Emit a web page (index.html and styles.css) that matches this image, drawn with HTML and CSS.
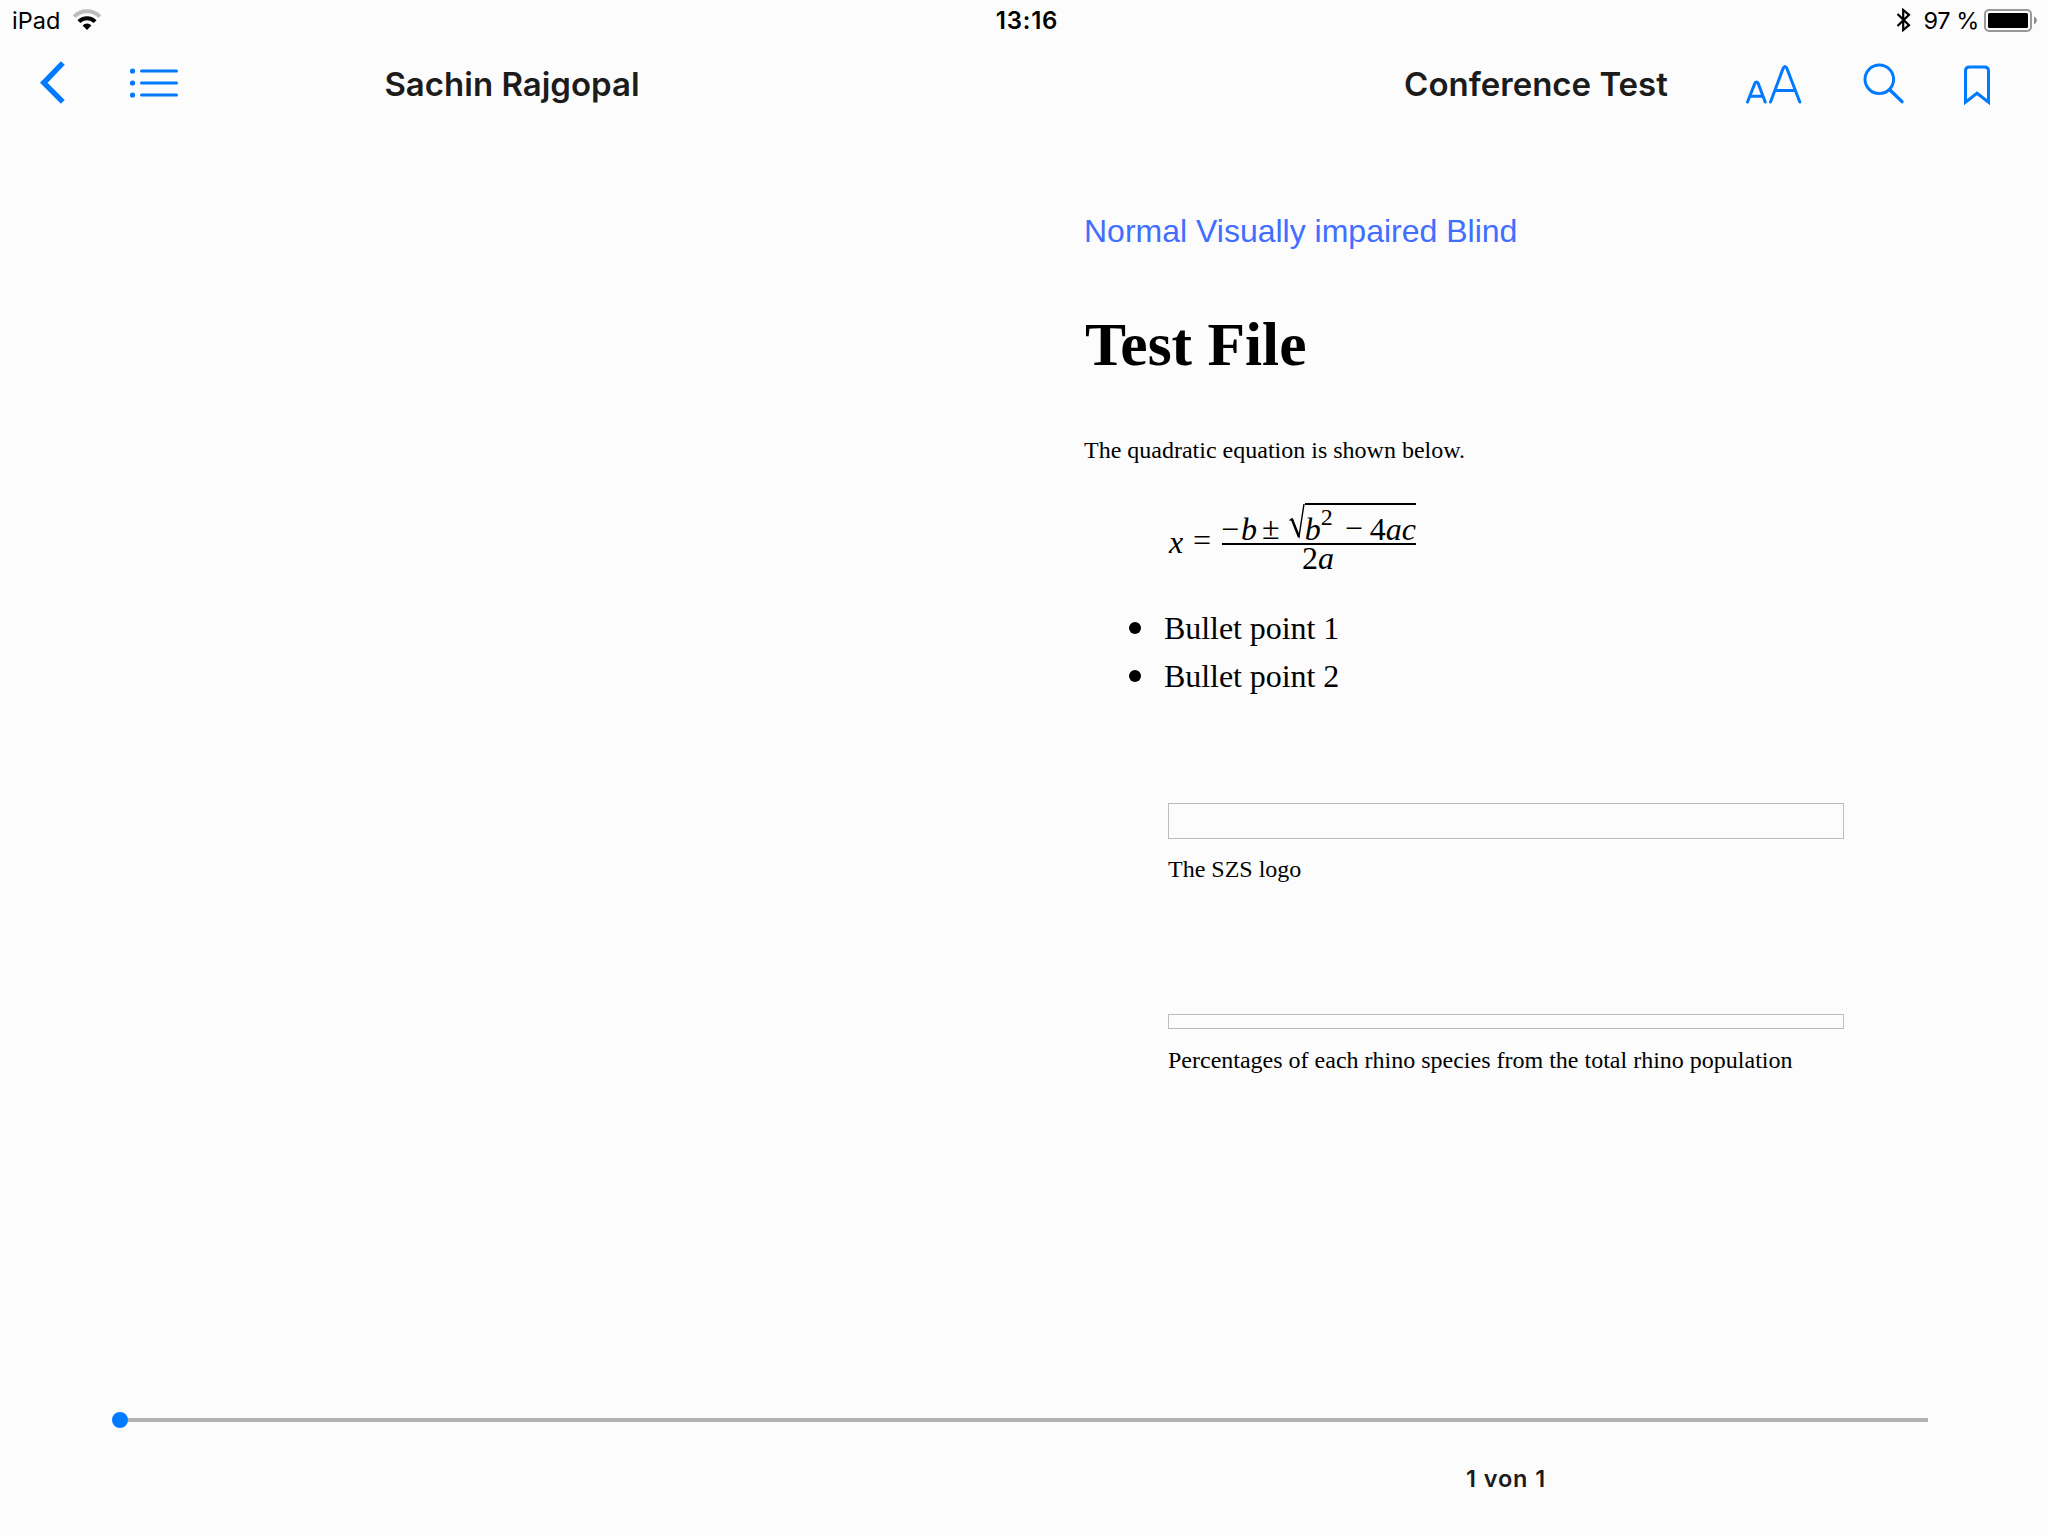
FILE: index.html
```html
<!DOCTYPE html>
<html lang="de">
<head>
<meta charset="utf-8">
<title>Conference Test</title>
<link rel="stylesheet" href="styles.css">
</head>
<body>
<header class="status">
  <div class="status-left">
    <span class="device">iPad</span>
    <svg class="wifi" width="30" height="22" viewBox="0 0 30 22">
      <path d="M2.2 7.6a18 18 0 0 1 25.6 0" fill="none" stroke="#bdbdbd" stroke-width="4"/>
      <path d="M6.9 12.6a11.4 11.4 0 0 1 16.2 0" fill="none" stroke="#000" stroke-width="4"/>
      <path d="M10.6 16.4a6.2 6.2 0 0 1 8.8 0L15 21z"/>
    </svg>
  </div>
  <span class="clock">13:16</span>
  <div class="status-right">
    <svg class="bluetooth" width="16" height="24" viewBox="0 0 16 24">
      <path d="M1.5 6L13 17.2 7.2 22V2L13 6.8 1.5 18" fill="none" stroke="#000" stroke-width="2.2"/>
    </svg>
    <span class="charge">97 %</span>
    <svg class="battery" width="54" height="24" viewBox="0 0 54 24">
      <rect x="1" y="1" width="46" height="21" rx="4" fill="none" stroke="#999" stroke-width="2"/>
      <rect x="4" y="4" width="40" height="15" rx="1.5"/>
      <path d="M50 7.6c3.8 1.8 3.8 6 0 7.8z" fill="#8c8c8c"/>
    </svg>
  </div>
</header>

<nav class="toolbar">
  <div class="half">
    <div class="tools-left">
      <svg class="back" width="26" height="44" viewBox="0 0 26 44">
        <path d="M22.8 2L3.8 21.8l19 19" fill="none" stroke="#007aff" stroke-width="5.4"/>
      </svg>
      <svg class="contents" width="50" height="30" viewBox="0 0 50 30">
        <g fill="#007aff"><circle cx="3.5" cy="3" r="2.6"/><circle cx="3.5" cy="15" r="2.6"/><circle cx="3.5" cy="27" r="2.6"/></g>
        <path d="M12.5 3H47.5M12.5 15H47.5M12.5 27H47.5" stroke="#007aff" stroke-width="3" stroke-linecap="round"/>
      </svg>
    </div>
    <span class="title">Sachin Rajgopal</span>
  </div>
  <div class="half">
    <span></span>
    <span class="title">Conference Test</span>
    <div class="tools-right">
      <svg class="fontsize" width="56" height="42" viewBox="0 0 56 42">
        <path d="M1.5 38L8.8 19.4q1.7-2.8 3.4 0L19.2 38M4.8 32.2H16M24.5 38L37.2 4.2q1.8-3.6 3.6 0L53.8 38M29 26.4H49" fill="none" stroke="#007aff" stroke-width="3" stroke-linecap="round"/>
      </svg>
      <svg class="search" width="42" height="42" viewBox="0 0 42 42">
        <circle cx="16.3" cy="16.3" r="14.3" fill="none" stroke="#007aff" stroke-width="3"/>
        <path d="M27 27L39 38.6" stroke="#007aff" stroke-width="3.4" stroke-linecap="round"/>
      </svg>
      <svg class="bookmark" width="28" height="42" viewBox="0 0 28 42">
        <path d="M2.5 37.2V6q0-4 4-4H21.5q4 0 4 4V37.2L14 28.2z" fill="none" stroke="#007aff" stroke-width="3"/>
      </svg>
    </div>
  </div>
</nav>

<main class="page">
  <p class="modes"><a>Normal Visually impaired Blind</a></p>
  <h1 class="heading">Test File</h1>
  <p class="text">The quadratic equation is shown below.</p>
  <div class="equation">
    <i class="var-x">x</i>
    <span class="equals">=</span>
    <div class="fraction">
      <div class="numerator">
        <span class="minus">−</span><i class="var-b">b</i><span class="plusminus">±</span>
        <svg class="radical" width="17" height="36" viewBox="0 0 17 36">
          <path d="M1.5 17.5L4 15.8 11 33.5 16 1" fill="none" stroke="#000" stroke-width="1.4"/>
          <path d="M3.8 16L11 34" stroke="#000" stroke-width="2.4"/>
        </svg>
        <div class="radicand">
          <i class="var-b2">b</i><span class="power">2</span><span class="minus2">−</span><span class="product">4<i>ac</i></span>
        </div>
      </div>
      <div class="denominator">2<i>a</i></div>
    </div>
  </div>
  <ul class="bullets">
    <li>Bullet point 1</li>
    <li>Bullet point 2</li>
  </ul>
  <figure class="figure logo">
    <div class="frame"></div>
    <figcaption>The SZS logo</figcaption>
  </figure>
  <figure class="figure chart">
    <div class="frame"></div>
    <figcaption>Percentages of each rhino species from the total rhino population</figcaption>
  </figure>
</main>

<footer class="footer">
  <div class="track"><span class="knob"></span></div>
  <p class="position">1 von 1</p>
</footer>
</body>
</html>
```
FILE: styles.css
```css
* { box-sizing: border-box; margin: 0; padding: 0; }

body {
  width: 2048px;
  height: 1536px;
  display: flex;
  flex-direction: column;
  overflow: hidden;
  background: #fcfcfc;
  color: #000;
  font-family: "Liberation Serif", "Times New Roman", serif;
}

svg { display: block; flex: none; }

/* Status bar */
.status {
  display: grid;
  grid-template-columns: 1fr auto 1fr;
  height: 40px;
  padding: 0 10px 0 12px;
  font: 23.5px/42px Inter, sans-serif;
}
.status-left, .status-right { display: flex; }
.status-right { justify-content: flex-end; }
.wifi { margin: 9px 0 0 12px; }
.clock { padding-left: 4px; font-size: 24px; font-weight: 600; letter-spacing: 0.8px; }
.bluetooth { margin: 8px 12px 0 0; }
.charge { letter-spacing: -0.4px; }
.battery { margin: 9px 0 0 5px; }

/* Toolbar */
.toolbar {
  display: grid;
  grid-template-columns: 1fr 1fr;
  height: 88px;
}
.half {
  display: grid;
  grid-template-columns: 1fr auto 1fr;
}
.title {
  font: 570 33px/88px Inter, sans-serif;
  color: #1c1c1c;
}
.tools-left { display: flex; padding-left: 40px; }
.back { margin-top: 21px; }
.contents { margin: 28px 0 0 63px; }
.tools-right { display: flex; justify-content: flex-end; padding-right: 57px; }
.fontsize { margin-top: 24px; }
.search { margin: 22.5px 0 0 60.5px; }
.bookmark { margin: 25px 0 0 58.5px; }

/* Book page */
.page {
  flex: 1;
  width: 844px;
  margin-left: 1084px;
  padding-top: 79px;
}
.modes {
  font: 32px/48px "Liberation Sans", Arial, sans-serif;
  color: #416eff;
}
.heading { margin: 53px 0 0 1px; font-size: 61.5px; line-height: 72px; }
.text { margin-top: 52px; font-size: 24px; line-height: 36px; }

/* Each term of the formula sits in a cell of its own width */
.equation {
  display: flex;
  height: 80px;
  margin: 32px 0 0 84px;
  font-size: 32px;
  line-height: 40px;
}
.var-x { width: 25px; margin-top: 22px; padding-left: 1px; }
.equals { width: 29px; margin-top: 20px; }
.fraction { width: 194px; }
.numerator {
  display: flex;
  height: 45px;
  border-bottom: 2px solid #000;
}
.minus, .var-b, .plusminus { margin-top: 9px; }
.minus { width: 20px; margin-left: -1px; }
.var-b { width: 21px; }
.plusminus { width: 26px; margin-top: 8px; }
.radical { margin-top: 3px; }
.radicand {
  display: flex;
  flex: 1;
  height: 36px;
  margin-top: 3px;
  border-top: 2px solid #000;
}
.var-b2, .minus2, .product { margin-top: 4px; }
.var-b2 { width: 16px; }
.power { width: 24px; margin-top: -8px; font-size: 24px; }
.minus2 { width: 25px; margin-top: 3px; }
.denominator { margin-top: -6px; line-height: 38px; text-align: center; padding-right: 2px; }

.bullets { margin-top: 24px; padding-left: 46px; list-style: none; }
.bullets li {
  display: flex;
  align-items: center;
  font-size: 32px;
  line-height: 48px;
  letter-spacing: -0.05px;
}
.bullets li::before {
  content: "";
  width: 12px;
  height: 12px;
  margin: 0 23px 1px -1px;
  border-radius: 50%;
  background: #000;
}

.figure { margin-left: 84px; font-size: 24px; line-height: 36px; }
.frame { width: 676px; border: 1px solid #bcbcbc; }
.logo { margin-top: 103px; }
.logo .frame { height: 36px; }
.chart { margin-top: 127px; }
.chart .frame { height: 15px; }
figcaption { margin-top: 12px; }
.chart figcaption { margin-top: 13px; }

/* Reading progress */
.footer { height: 118px; }
.track {
  width: 1808px;
  height: 4px;
  margin-left: 120px;
  background: #b2b2b2;
}
.knob {
  display: block;
  position: relative;
  left: -8px;
  top: -6px;
  width: 16px;
  height: 16px;
  border-radius: 50%;
  background: #007aff;
}
.position {
  width: 844px;
  margin: 37px 0 0 1084px;
  text-align: center;
  font: 570 23.5px/40px Inter, sans-serif;
  letter-spacing: 0.9px;
  color: #1c1c1c;
}
```
